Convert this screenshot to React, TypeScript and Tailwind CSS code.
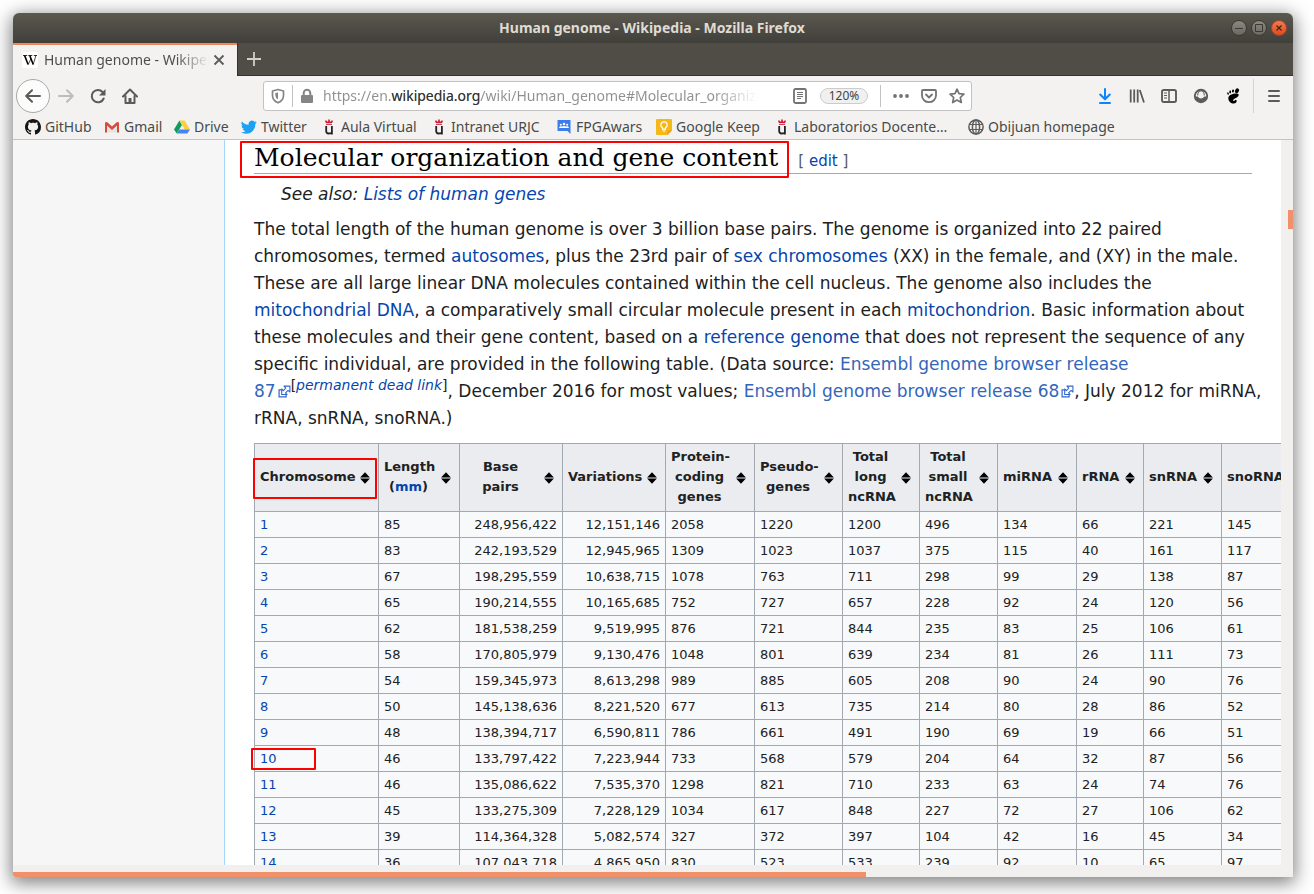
import React from 'react';

const chromosomes: string[][] = [
  ['1', '85', '248,956,422', '12,151,146', '2058', '1220', '1200', '496', '134', '66', '221', '145'],
  ['2', '83', '242,193,529', '12,945,965', '1309', '1023', '1037', '375', '115', '40', '161', '117'],
  ['3', '67', '198,295,559', '10,638,715', '1078', '763', '711', '298', '99', '29', '138', '87'],
  ['4', '65', '190,214,555', '10,165,685', '752', '727', '657', '228', '92', '24', '120', '56'],
  ['5', '62', '181,538,259', '9,519,995', '876', '721', '844', '235', '83', '25', '106', '61'],
  ['6', '58', '170,805,979', '9,130,476', '1048', '801', '639', '234', '81', '26', '111', '73'],
  ['7', '54', '159,345,973', '8,613,298', '989', '885', '605', '208', '90', '24', '90', '76'],
  ['8', '50', '145,138,636', '8,221,520', '677', '613', '735', '214', '80', '28', '86', '52'],
  ['9', '48', '138,394,717', '6,590,811', '786', '661', '491', '190', '69', '19', '66', '51'],
  ['10', '46', '133,797,422', '7,223,944', '733', '568', '579', '204', '64', '32', '87', '56'],
  ['11', '46', '135,086,622', '7,535,370', '1298', '821', '710', '233', '63', '24', '74', '76'],
  ['12', '45', '133,275,309', '7,228,129', '1034', '617', '848', '227', '72', '27', '106', '62'],
  ['13', '39', '114,364,328', '5,082,574', '327', '372', '397', '104', '42', '16', '45', '34'],
  ['14', '36', '107,043,718', '4,865,950', '830', '523', '533', '239', '92', '10', '65', '97'],
];

const columns: { width: string; label: React.ReactNode }[] = [
  { width: 'w-[124px]', label: 'Chromosome' },
  { width: 'w-[81px]', label: <>Length<br />(<a href="#mm" className="text-[#0645ad]">mm</a>)</> },
  { width: 'w-[103px]', label: <>Base<br />pairs</> },
  { width: 'w-[103px]', label: 'Variations' },
  { width: 'w-[89px]', label: <>Protein-<br />coding<br />genes</> },
  { width: 'w-[88px]', label: <>Pseudo-<br />genes</> },
  { width: 'w-[77px]', label: <>Total<br />long<br />ncRNA</> },
  { width: 'w-[78px]', label: <>Total<br />small<br />ncRNA</> },
  { width: 'w-[79px]', label: 'miRNA' },
  { width: 'w-[67px]', label: 'rRNA' },
  { width: 'w-[78px]', label: 'snRNA' },
  { width: 'w-[86px]', label: 'snoRNA' },
];

function SortIcon() {
  return (
    <svg viewBox="0 0 10 12" className="absolute top-1/2 right-2 h-3 w-[10px] -translate-y-1/2" aria-hidden="true">
      <path d="M5 .3 9.900 5.400H.1zM.1 6.600h9.800L5 11.700z" fill="#000" />
    </svg>
  );
}

function ExternalIcon() {
  return (
    <svg viewBox="0 0 12 12" className="ml-[2px] inline-block h-[13px] w-[13px] align-[-1px]" aria-hidden="true">
      <path d="M4.500 4.500H1v6.500h6.500V8.500" fill="none" stroke="#36c" strokeWidth="1.100" />
      <path d="M5.500 1H11v5.500L9.300 4.900 7 7.200l1.400 1.600H3.400V3.700L5 5.200l2.200-2.400z" fill="#fff" stroke="#36c" strokeWidth="1" strokeLinejoin="round" />
    </svg>
  );
}

function GitHubIcon() {
  return (
    <svg viewBox="0 0 16 16" className="size-4" aria-hidden="true">
      <path
        fill="#161614"
        d="M8 0C3.580 0 0 3.580 0 8c0 3.540 2.290 6.530 5.470 7.590.4.070.55-.17.55-.38 0-.19-.01-.82-.01-1.490-2.010.37-2.530-.49-2.690-.94-.09-.23-.48-.94-.82-1.130-.28-.15-.68-.52-.01-.53.63-.01 1.080.58 1.230.82.72 1.210 1.870.87 2.330.66.07-.52.28-.87.51-1.070-1.780-.2-3.640-.89-3.640-3.950 0-.87.31-1.590.82-2.150-.08-.2-.36-1.020.08-2.120 0 0 .67-.21 2.200.82.64-.18 1.320-.27 2-.27s1.360.09 2 .27c1.530-1.040 2.200-.82 2.200-.82.44 1.100.16 1.920.08 2.120.51.56.82 1.270.82 2.150 0 3.070-1.870 3.750-3.650 3.950.29.25.54.73.54 1.480 0 1.070-.01 1.930-.01 2.200 0 .21.15.46.55.38A8.010 8.010 0 0 0 16 8c0-4.420-3.580-8-8-8z"
      />
    </svg>
  );
}

function GmailIcon() {
  return (
    <svg viewBox="0 0 16 16" className="size-4" aria-hidden="true">
      <rect x="1" y="3" width="14" height="10.500" rx=".8" fill="#f1f1f1" />
      <path d="M3 13.500V5.500l5 4 5-4v8z" fill="#e3e3e3" />
      <path d="M1 13.500V3.500L3 3l5 4.500L13 3l2 .5v10h-2V6.500L8 11 3 6.500v7z" fill="#d54b3d" />
    </svg>
  );
}

function DriveIcon() {
  return (
    <svg viewBox="0 0 16 16" className="size-4" aria-hidden="true">
      <path d="M5.400 1.500 8 6 2.700 14.600 0 10.400z" fill="#0f9d58" />
      <path d="M5.400 1.500h5.200L16 10.400h-5.300z" fill="#ffcd40" />
      <path d="M5.300 10.400H16l-2.700 4.200H2.700z" fill="#4285f4" />
    </svg>
  );
}

function TwitterIcon() {
  return (
    <svg viewBox="0 0 24 24" className="size-4" aria-hidden="true">
      <path
        fill="#1da1f2"
        d="M23.600 4.900a9.700 9.700 0 0 1-2.800.8 4.900 4.900 0 0 0 2.200-2.700 9.700 9.700 0 0 1-3.100 1.200 4.900 4.900 0 0 0-8.400 4.500A13.900 13.900 0 0 1 1.400 3.600a4.900 4.900 0 0 0 1.500 6.500 4.900 4.900 0 0 1-2.200-.6v.1a4.900 4.900 0 0 0 3.900 4.800 4.900 4.900 0 0 1-2.200.1 4.900 4.900 0 0 0 4.600 3.400A9.800 9.800 0 0 1 0 19.900a13.900 13.900 0 0 0 7.500 2.200c9.100 0 14-7.500 14-14v-.6a10 10 0 0 0 2.100-2.600z"
      />
    </svg>
  );
}

function UniversityIcon() {
  return (
    <svg viewBox="0 0 16 16" className="size-4" aria-hidden="true">
      <path d="M4.200 1.500h1.600v1h1.400V.5h1.600v2h1.400v-1h1.600v1.300l-.8 1.100H5l-.8-1.100z" fill="#cf1733" />
      <path d="M5 5.300h6" stroke="#cf1733" strokeWidth="1" />
      <path d="M5.200 7v5.300q0 2.200 2.400 2.200 2.600 0 2.900-1M10.900 7v8.500" fill="none" stroke="#222" strokeWidth="1.800" />
    </svg>
  );
}

function GroupIcon() {
  return (
    <svg viewBox="0 0 16 16" className="size-4" aria-hidden="true">
      <path d="M1.500 1h13v14l-3-3h-10z" fill="#3b7ded" />
      <circle cx="8" cy="5" r="1.300" fill="#fff" />
      <circle cx="4.800" cy="5.800" r="1" fill="#fff" />
      <circle cx="11.200" cy="5.800" r="1" fill="#fff" />
      <path d="M3.200 9V8q1.500-1.200 2.600-.4Q8 6.200 10.200 7.600q1.100-.8 2.600.4v1z" fill="#fff" />
    </svg>
  );
}

function KeepIcon() {
  return (
    <svg viewBox="0 0 16 16" className="size-4" aria-hidden="true">
      <path d="M1 0h14q1 0 1 1v10.500L11.500 16H1q-1 0-1-1V1q0-1 1-1z" fill="#f4b916" />
      <path d="M16 11.500h-4.500V16z" fill="#f7981d" />
      <path d="M6.500 10.200V8.800Q4.800 7.800 4.800 6a3.200 3.200 0 0 1 6.400 0q0 1.800-1.700 2.800v1.400zM6.600 12h2.800" fill="none" stroke="#fff" strokeWidth="1.200" />
    </svg>
  );
}

function GlobeIcon() {
  return (
    <svg viewBox="0 0 16 16" className="size-4" fill="none" stroke="#5b5b5a" strokeWidth="1.500" aria-hidden="true">
      <circle cx="8" cy="8" r="7.100" />
      <ellipse cx="8" cy="8" rx="3.600" ry="7.100" />
      <path d="M1.500 5.500h13M1.500 10.500h13M8 1v14" strokeWidth="1.200" />
    </svg>
  );
}

const bookmarks: { label: string; width: string; icon: React.ReactNode }[] = [
  { label: 'GitHub', width: 'w-[79px]', icon: <GitHubIcon /> },
  { label: 'Gmail', width: 'w-[70px]', icon: <GmailIcon /> },
  { label: 'Drive', width: 'w-[67px]', icon: <DriveIcon /> },
  { label: 'Twitter', width: 'w-[80px]', icon: <TwitterIcon /> },
  { label: 'Aula Virtual', width: 'w-[110px]', icon: <UniversityIcon /> },
  { label: 'Intranet URJC', width: 'w-[125px]', icon: <UniversityIcon /> },
  { label: 'FPGAwars', width: 'w-[100px]', icon: <GroupIcon /> },
  { label: 'Google Keep', width: 'w-[118px]', icon: <KeepIcon /> },
  { label: 'Laboratorios Docente…', width: 'w-[194px]', icon: <UniversityIcon /> },
  { label: 'Obijuan homepage', width: 'w-[150px]', icon: <GlobeIcon /> },
];

function TitleBar() {
  return (
    <header className="flex h-[30px] shrink-0 items-center bg-linear-to-b from-[#5b584f] to-[#403f3a] pr-[6px] pl-[60px]">
      <h1 className="flex-1 text-center text-sm font-bold text-[#dfdbd2]">Human genome - Wikipedia - Mozilla Firefox</h1>
      <div className="flex gap-1">
        <button aria-label="Minimize" className="size-4 rounded-full border border-[#3a3935] bg-linear-to-b from-[#8b8980] to-[#6a6860]">
          <svg viewBox="0 0 14 14" className="size-full"><path d="M3 7.500h8" stroke="#3a3935" strokeWidth="1" /></svg>
        </button>
        <button aria-label="Maximize" className="size-4 rounded-full border border-[#3a3935] bg-linear-to-b from-[#8b8980] to-[#6a6860]">
          <svg viewBox="0 0 14 14" className="size-full"><path d="M3.500 3.500h7v7h-7z" fill="none" stroke="#3a3935" strokeWidth="1" /></svg>
        </button>
        <button aria-label="Close" className="size-4 rounded-full border border-[#a5482c] bg-linear-to-b from-[#f4794f] to-[#df4a1b]">
          <svg viewBox="0 0 14 14" className="size-full"><path d="m4.500 4.500 5 5m0-5-5 5" stroke="#45210f" strokeWidth="1.200" /></svg>
        </button>
      </div>
    </header>
  );
}

function TabStrip() {
  return (
    <div className="flex h-[33px] shrink-0 bg-[#504d46]">
      <div className="flex w-56 items-center border-t-2 border-[#f4845a] bg-[#f3f2f1] pb-[2px] pl-[9px]">
        <svg viewBox="0 0 16 16" className="size-4 shrink-0" aria-hidden="true">
          <rect width="16" height="16" rx="2.500" fill="#fff" />
          <path d="M1 3.500h4.200M6.300 3.500h4M11.800 3.500H15" stroke="#000" strokeWidth=".8" />
          <path d="m2.600 3.500 3.500 9" stroke="#000" strokeWidth="1.600" />
          <path d="m7.800 3.500 3.400 9" stroke="#000" strokeWidth="1.600" />
          <path d="m6.200 12.500 2.700-5.700M11.200 12.500l2.700-9" stroke="#000" strokeWidth=".7" />
        </svg>
        <span className="ml-[6px] w-[165px] overflow-hidden bg-linear-to-r from-[#4a4a49] from-80% to-transparent bg-clip-text text-sm whitespace-nowrap text-transparent">
          Human genome - Wikipedia
        </span>
        <button aria-label="Close tab" className="ml-[2px] size-4 shrink-0">
          <svg viewBox="0 0 16 16" className="size-full"><path d="m3.500 3.500 9 9m0-9-9 9" stroke="#5b5b5a" strokeWidth="1.800" /></svg>
        </button>
      </div>
      <div className="flex flex-1 items-center border-b border-l border-[#35322e] pl-2">
        <button aria-label="New tab" className="size-4">
          <svg viewBox="0 0 16 16" className="size-full"><path d="M8 1v14M1 8h14" stroke="#d2cfc8" strokeWidth="1.800" /></svg>
        </button>
      </div>
    </div>
  );
}

function NavBar() {
  return (
    <nav className="flex h-10 shrink-0 items-center" aria-label="Navigation">
      <button aria-label="Back" className="ml-[3px] flex size-[34px] shrink-0 items-center justify-center rounded-full border border-[#a9a8a6] bg-[#fcfcfc]">
        <svg viewBox="0 0 16 16" className="size-4" fill="none" stroke="#5b5b5a" strokeWidth="2" strokeLinecap="round" strokeLinejoin="round"><path d="M15 8H1.500M7 2.200 1.200 8 7 13.800" /></svg>
      </button>
      <button aria-label="Forward" className="ml-2 size-4 shrink-0">
        <svg viewBox="0 0 16 16" className="size-4" fill="none" stroke="#bdbcbb" strokeWidth="2" strokeLinecap="round" strokeLinejoin="round"><path d="M1 8h13.500M9 2.200 14.800 8 9 13.800" /></svg>
      </button>
      <button aria-label="Reload" className="ml-4 size-4 shrink-0">
        <svg viewBox="0 0 16 16" className="size-4" fill="none" stroke="#5b5b5a" strokeWidth="2"><path d="M13.700 10.500A6.200 6.200 0 1 1 12.600 4" strokeLinecap="round" /><path d="M15.500 1v6.500H9z" fill="#5b5b5a" stroke="none" /></svg>
      </button>
      <button aria-label="Home" className="ml-4 size-4 shrink-0">
        <svg viewBox="0 0 16 16" className="size-4" fill="none" stroke="#5b5b5a" strokeWidth="2" strokeLinecap="round" strokeLinejoin="round"><path d="M1 8.500 8 1.500l7 7M3.500 8v7h9V8" /><path d="M8 10v4" strokeWidth="3" strokeLinecap="butt" /></svg>
      </button>

      <div className="ml-[125px] flex h-[30px] w-[709px] items-center rounded-[3px] border border-[#c4c2c0] bg-white pr-[6px] pl-[6px]">
        <svg viewBox="0 0 16 16" className="size-4 shrink-0" fill="none" stroke="#858585" strokeWidth="1.700" aria-hidden="true"><path d="M8 1.500 13.500 3v4.500q0 5-5.500 7.300Q2.500 12.500 2.500 7.500V3z" strokeLinejoin="round" /><path d="M8 4.500v7Q5.300 10 5.300 7V5z" fill="#858585" stroke="none" /></svg>
        <span className="mr-[6px] ml-[6px] h-[22px] w-px shrink-0 bg-[#c4c2c0]" />
        <svg viewBox="0 0 16 16" className="size-4 shrink-0" aria-hidden="true"><path d="M4.700 7.500V5a3.300 3.300 0 0 1 6.600 0v2.500" fill="none" stroke="#858585" strokeWidth="2" /><rect x="2" y="7" width="12" height="8" rx="1" fill="#858585" /></svg>
        <span className="ml-2 w-[434px] overflow-hidden bg-linear-to-r from-[#8f8f8e] from-90% to-transparent bg-clip-text text-sm whitespace-nowrap text-transparent">
          https://en.<span className="text-[#333]">wikipedia.org</span>/wiki/Human_genome#Molecular_organization
        </span>
        <button aria-label="Reader view" className="ml-auto size-4 shrink-0">
          <svg viewBox="0 0 16 16" className="size-4" fill="none" stroke="#737373"><rect x="2" y="1" width="12" height="14" rx="1.500" strokeWidth="1.800" /><path d="M5 4.500h6M5 6.500h6M5 8.500h6M5 10.500h4" strokeWidth="1" /></svg>
        </button>
        <button className="ml-3 h-4 w-12 shrink-0 rounded-full border border-[#ccc] bg-[#f0f0f0] text-[12px] leading-[14px] text-[#444]">120%</button>
        <span className="ml-3 h-[22px] w-px shrink-0 bg-[#c4c2c0]" />
        <button aria-label="Page actions" className="ml-3 size-4 shrink-0">
          <svg viewBox="0 0 16 16" className="size-4" fill="#737373"><circle cx="2" cy="8" r="1.900" /><circle cx="8" cy="8" r="1.900" /><circle cx="14" cy="8" r="1.900" /></svg>
        </button>
        <button aria-label="Save to Pocket" className="ml-3 size-4 shrink-0">
          <svg viewBox="0 0 16 16" className="size-4" fill="none" stroke="#737373" strokeWidth="1.800" strokeLinecap="round" strokeLinejoin="round"><path d="M2 2h12q1 0 1 1v4.500a7 6.700 0 0 1-14 0V3q0-1 1-1z" /><path d="M5 6.500 8 9.500l3-3" /></svg>
        </button>
        <button aria-label="Bookmark this page" className="ml-3 size-4 shrink-0">
          <svg viewBox="0 0 16 16" className="size-4" fill="none" stroke="#737373" strokeWidth="1.700" strokeLinejoin="round"><path d="m8 1.200 2 4.400 4.900.5-3.600 3.400 1 5L8 12.100l-4.300 2.400 1-5L1.100 6.100 6 5.600z" /></svg>
        </button>
      </div>

      <div className="ml-auto flex items-center gap-4 pr-[11px]">
        <button aria-label="Downloads" className="size-4">
          <svg viewBox="0 0 16 16" className="size-4" fill="none" stroke="#0a84ff" strokeWidth="2" strokeLinecap="round" strokeLinejoin="round"><path d="M8 1v9.500M3.200 6.500 8 11.200l4.800-4.700M3 15h10" /></svg>
        </button>
        <button aria-label="Library" className="size-4">
          <svg viewBox="0 0 16 16" className="size-4" fill="none" stroke="#5b5b5a" strokeWidth="1.800"><path d="M1.700 1.500v13M5.200 1.500v13M8.700 1.500v13M10.800 2l4.200 12.500" /></svg>
        </button>
        <button aria-label="Sidebars" className="size-4">
          <svg viewBox="0 0 16 16" className="size-4" fill="none" stroke="#5b5b5a" strokeWidth="1.900"><rect x="1" y="2" width="14" height="12" rx="1.800" /><path d="M8 2v12" strokeWidth="1.500" /><path d="M3 5h3M3 7.500h3M3 10h3" strokeWidth="1" /></svg>
        </button>
        <button aria-label="Account" className="size-4">
          <svg viewBox="0 0 16 16" className="size-4"><circle cx="8" cy="8" r="6.200" fill="none" stroke="#5b5b5a" strokeWidth="1.900" /><path d="M2 8.500h2.800q1 2 3.200 2t3.200-2H14q-.5 5.500-6 5.500T2 8.500z" fill="#5b5b5a" /><path d="M4.800 7.500V6a3.200 3.200 0 0 1 6.400 0v1.500" fill="none" stroke="#5b5b5a" strokeWidth="1" /></svg>
        </button>
        <button aria-label="GNOME Shell integration" className="size-4">
          <svg viewBox="0 0 16 16" className="size-4" fill="#000"><ellipse cx="12" cy="2.700" rx="1.900" ry="2.500" transform="rotate(25 12 2.700)" /><ellipse cx="8" cy="3" rx="1" ry="1.600" transform="rotate(10 8 3)" /><ellipse cx="5.200" cy="4" rx=".9" ry="1.400" /><ellipse cx="3" cy="5.600" rx=".8" ry="1.300" transform="rotate(-20 3 5.600)" /><path d="M12 5.600C8.500 5.300 3.300 7 3.300 10.200c0 3 2.600 5.400 5.400 5.400 2.200 0 3.300-1.600 2.900-3.100-.3-1.200-1.300-.9-1.700-.2-.4.800-1.400.8-1.700.1-.8-1.600 4.900-2.600 5.400-5 .2-1-.5-1.700-1.600-1.800z" /></svg>
        </button>
        <span className="-ml-1 h-[34px] w-px bg-[#d5d3d1]" />
        <button aria-label="Open menu" className="-ml-1 size-4">
          <svg viewBox="0 0 16 16" className="size-4" stroke="#5b5b5a" strokeWidth="2" strokeLinecap="round"><path d="M3 3h10M3 8h10M3 13h10" /></svg>
        </button>
      </div>
    </nav>
  );
}

function BookmarkBar() {
  return (
    <div className="flex h-6 shrink-0 items-center border-b border-[#c5c3c1] pb-[2px] pl-3 text-sm text-[#4a4a49]">
      {bookmarks.map((b) => (
        <a key={b.label} href="#bookmark" className={`flex shrink-0 items-center gap-1 whitespace-nowrap ${b.width}`}>
          {b.icon}
          <span>{b.label}</span>
        </a>
      ))}
    </div>
  );
}

function GenomeTable() {
  return (
    <table className="mt-[11px] w-[1053px] table-fixed border-collapse bg-[#f8f9fa] text-[13px] leading-5 text-[#202122]">
      <colgroup>
        {columns.map((c, i) => <col key={i} className={c.width} />)}
      </colgroup>
      <thead>
        <tr className="h-[68px]">
          {columns.map((c, i) => (
            <th key={i} scope="col" className="relative border border-[#a2a9b1] bg-[#eaecf0] pt-[2px] pr-[26px] pb-1 pl-[5px] text-center align-middle font-bold whitespace-nowrap">
              {c.label}
              <SortIcon />
              {i === 0 && <span className="absolute top-[14px] right-px bottom-3 left-[-2px] rounded-[1px] border-2 border-[#ff0000]" />}
            </th>
          ))}
        </tr>
      </thead>
      <tbody>
        {chromosomes.map((row) => (
          <tr key={row[0]}>
            {row.map((value, i) => (
              <td key={i} className={`relative border border-[#a2a9b1] px-[5px] pt-[3px] pb-[2px] ${i === 2 || i === 3 ? 'text-right' : 'text-left'}`}>
                {i === 0 ? <a href="#chromosome" className="text-[#0645ad]">{value}</a> : value}
                {i === 0 && value === '10' && <span className="absolute top-1/2 left-[-4px] h-[22px] w-[65px] -translate-y-1/2 rounded-[1px] border-2 border-[#ff0000]" />}
              </td>
            ))}
          </tr>
        ))}
      </tbody>
    </table>
  );
}

function Article() {
  return (
    <div className="flex min-h-0 flex-1">
      <aside className="w-[211px] shrink-0 bg-[#f6f6f6]" />
      <main className="min-w-0 flex-1 overflow-hidden border-l border-[#a7d7f9] bg-white pl-[29px] font-['DejaVu_Sans',sans-serif] text-[17px] leading-[27px] text-[#202122]">
        <div className="mr-[29px] flex h-[34px] items-baseline border-b border-[#a2a9b1] whitespace-nowrap">
          <h2 className="relative font-['DejaVu_Serif',serif] text-[25px] leading-9 text-black">
            Molecular organization and gene content
            <span className="absolute top-px -right-[11px] -bottom-[2px] -left-[14px] rounded-[1px] border-2 border-[#ff0000]" />
          </h2>
          <span className="ml-5 text-[15px] text-[#54595d]">[ <a href="#edit" className="text-[#0645ad]">edit</a> ]</span>
        </div>
        <p className="mt-[7px] pl-[27px] italic">See also: <a href="#lists" className="text-[#0645ad]">Lists of human genes</a></p>
        <p className="mt-2 whitespace-nowrap">
          The total length of the human genome is over 3 billion base pairs. The genome is organized into 22 paired<br />
          chromosomes, termed <a href="#a" className="text-[#0645ad]">autosomes</a>, plus the 23rd pair of <a href="#s" className="text-[#0645ad]">sex chromosomes</a> (XX) in the female, and (XY) in the male.<br />
          These are all large linear DNA molecules contained within the cell nucleus. The genome also includes the<br />
          <a href="#mt" className="text-[#0645ad]">mitochondrial DNA</a>, a comparatively small circular molecule present in each <a href="#m" className="text-[#0645ad]">mitochondrion</a>. Basic information about<br />
          these molecules and their gene content, based on a <a href="#r" className="text-[#0645ad]">reference genome</a> that does not represent the sequence of any<br />
          specific individual, are provided in the following table. (Data source: <a href="#e87" className="text-[#3366bb]">Ensembl genome browser release<br />
          87<ExternalIcon /></a><sup className="text-sm leading-none">[<a href="#dead" className="text-[#0645ad] italic">permanent dead link</a>]</sup>, December 2016 for most values; <a href="#e68" className="text-[#3366bb]">Ensembl genome browser release 68<ExternalIcon /></a>, July 2012 for miRNA,<br />
          rRNA, snRNA, snoRNA.)
        </p>
        <GenomeTable />
      </main>
      <div className="flex w-3 shrink-0 justify-end bg-[#f1f0ee] pt-[70px]">
        <span className="h-[19px] w-[5px] bg-[#f29069]" />
      </div>
    </div>
  );
}

export default function App() {
  return (
    <div className="flex h-screen bg-white pt-[13px] pr-[21px] pb-[17px] pl-[13px] font-['Noto_Sans',sans-serif]">
      <div className="flex min-w-0 flex-1 flex-col overflow-hidden rounded-t-md bg-[#f3f2f1] shadow-[0_4px_18px_2px_rgba(0,0,0,0.5)]">
        <TitleBar />
        <TabStrip />
        <NavBar />
        <BookmarkBar />
        <Article />
        <div className="flex h-3 shrink-0 items-end bg-[#f1f0ee]">
          <span className="h-[5px] w-2/3 rounded-bl-xs bg-[#f29069]" />
        </div>
      </div>
    </div>
  );
}
